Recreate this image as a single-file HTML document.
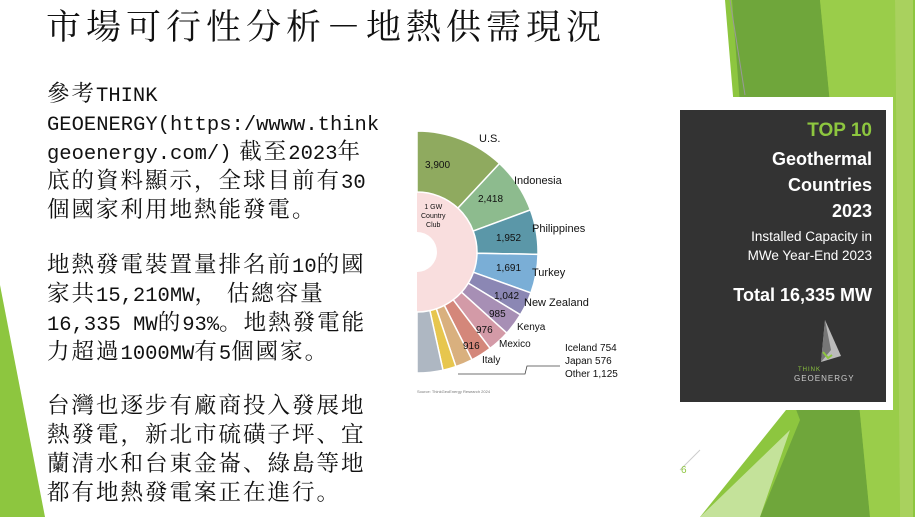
<!DOCTYPE html>
<html><head><meta charset="utf-8"><style>
body{margin:0;width:915px;height:517px;overflow:hidden;background:#fff;position:relative;font-family:"Liberation Sans",sans-serif}
.t{position:absolute;left:47px;white-space:nowrap;font-family:"Noto Serif CJK SC","Noto Serif CJK SC",serif;font-size:22.5px;letter-spacing:2px;color:#111;line-height:29px}
.t span{font-family:"Liberation Mono",monospace;font-size:20.5px;letter-spacing:0}
.ttl{position:absolute;left:46px;top:0px;font-family:"Noto Serif CJK SC",serif;font-size:35px;letter-spacing:5px;color:#111;white-space:nowrap}
.lb{position:absolute;font-size:10px;color:#111;white-space:nowrap}
.box{position:absolute;left:680px;top:110px;width:206px;height:292px;background:#333;color:#fff;text-align:right}
</style></head><body>
<svg width="915" height="517" style="position:absolute;left:0;top:0">
<polygon points="725,0 915,0 915,517 700,517 790,405 750,300" fill="#8dc63f"/>
<polygon points="732,0 820,0 870,517 760,517 800,420 755,300" fill="#6fa63b"/>
<polygon points="820,0 895,0 900,517 870,517" fill="#9acd4a"/>
<polygon points="700,517 790,430 760,517" fill="#c4e29a"/>
<polygon points="895,0 913,0 913,517 900,517" fill="#a9d15e"/>
<line x1="730" y1="0" x2="745" y2="95" stroke="#999" stroke-width="1"/>
<line x1="700" y1="450" x2="680" y2="470" stroke="#ccc" stroke-width="1"/>
<polygon points="0,285 45,517 0,517" fill="#8dc63f"/>
<rect x="403" y="110" width="277" height="292" fill="#fff"/>
<rect x="672" y="97" width="221" height="313" fill="#fff"/>
<g id="ch"></g>
</svg>
<div class="ttl">市場可行性分析－地熱供需現況</div>
<div class="t" style="top:78px">參考<span>THINK</span></div>
<div class="t" style="top:107px"><span>GEOENERGY(https:/wwww.think</span></div>
<div class="t" style="top:136px"><span>geoenergy.com/)</span> 截至<span>2023</span>年</div>
<div class="t" style="top:165px">底的資料顯示，全球目前有<span>30</span></div>
<div class="t" style="top:194px">個國家利用地熱能發電。</div>
<div class="t" style="top:249px">地熱發電裝置量排名前<span>10</span>的國</div>
<div class="t" style="top:278px">家共<span>15,210MW</span>， 估總容量</div>
<div class="t" style="top:307px"><span>16,335 MW</span>的<span>93%</span>。地熱發電能</div>
<div class="t" style="top:336px">力超過<span>1000MW</span>有<span>5</span>個國家。</div>
<div class="t" style="top:390px">台灣也逐步有廠商投入發展地</div>
<div class="t" style="top:419px">熱發電，新北市硫磺子坪、宜</div>
<div class="t" style="top:448px">蘭清水和台東金崙、綠島等地</div>
<div class="t" style="top:477px">都有地熱發電案正在進行。</div>

<div class="lb" style="left:479px;top:133px;font-size:11px">U.S.</div>
<div class="lb" style="left:425px;top:160px">3,900</div>
<div class="lb" style="left:514px;top:175px;font-size:11px">Indonesia</div>
<div class="lb" style="left:478px;top:194px">2,418</div>
<div class="lb" style="left:532px;top:223px;font-size:11px">Philippines</div>
<div class="lb" style="left:496px;top:233px">1,952</div>
<div class="lb" style="left:532px;top:267px;font-size:11px">Turkey</div>
<div class="lb" style="left:496px;top:263px">1,691</div>
<div class="lb" style="left:524px;top:297px;font-size:11px">New Zealand</div>
<div class="lb" style="left:494px;top:291px">1,042</div>
<div class="lb" style="left:517px;top:322px">Kenya</div>
<div class="lb" style="left:489px;top:309px">985</div>
<div class="lb" style="left:499px;top:339px">Mexico</div>
<div class="lb" style="left:476px;top:325px">976</div>
<div class="lb" style="left:482px;top:355px">Italy</div>
<div class="lb" style="left:463px;top:341px">916</div>
<div class="lb" style="left:565px;top:343px">Iceland 754</div>
<div class="lb" style="left:565px;top:356px">Japan 576</div>
<div class="lb" style="left:565px;top:369px">Other 1,125</div>
<div class="lb" style="left:421px;top:203px;font-size:7px;line-height:9px;text-align:center">1 GW<br>Country<br>Club</div>
<div class="lb" style="left:417px;top:389px;font-size:4px;color:#777">Source: ThinkGeoEnergy Research 2024</div>

<div class="box">
<div style="position:absolute;right:14px;top:10px;font-weight:bold;font-size:19px;color:#8dc63f">TOP 10</div>
<div style="position:absolute;right:14px;top:36px;font-weight:bold;font-size:18px;line-height:26px">Geothermal<br>Countries<br>2023</div>
<div style="position:absolute;right:14px;top:117px;font-size:13.5px;line-height:19px">Installed Capacity in<br>MWe Year-End 2023</div>
<div style="position:absolute;right:14px;top:175px;font-weight:bold;font-size:18px">Total 16,335 MW</div>
<svg style="position:absolute;left:135px;top:210px" width="30" height="45"><polygon points="10,0 26,36 6,42" fill="#bbb"/><polygon points="10,0 16,30 6,42" fill="#777"/><path d="M8 32 l5 6 l4-3" stroke="#8dc63f" stroke-width="2" fill="none"/></svg>
<div style="position:absolute;left:118px;top:257px;font-size:6px;color:#8dc63f;letter-spacing:1px;text-align:left">THINK</div>
<div style="position:absolute;left:114px;top:264px;font-size:8px;color:#ccc;letter-spacing:1px">GEOENERGY</div>
</div>
<div style="position:absolute;left:681px;top:465px;font-size:10px;color:#8dc63f">6</div>
<script>
var vals=[3900,2418,1952,1691,1042,985,976,916,754,576,1125];
var cols=["#8faa5f","#8dbb8e","#5b97a8","#7aaed6","#8b87b4","#a78fb5","#d39aa7","#d4877a","#d9b07e","#e7c64e","#aeb7c2"];
var cx=417,cy=252,R=121,r=60,tot=16335,a=-Math.PI/2,s="";
function p(rr,t){return (cx+rr*Math.cos(t)).toFixed(1)+","+(cy+rr*Math.sin(t)).toFixed(1)}
s+='<path d="M'+p(r,-Math.PI/2)+' A'+r+','+r+' 0 0 1 '+p(r,Math.PI/2)+' Z" fill="#f9dede"/>';
s+='<path d="M'+p(20,-Math.PI/2)+' A20,20 0 0 1 '+p(20,Math.PI/2)+' Z" fill="#fff"/>';
for(var i=0;i<vals.length;i++){var b=a+Math.PI*vals[i]/tot;
s+='<path d="M'+p(r,a)+' L'+p(R,a)+' A'+R+','+R+' 0 0 1 '+p(R,b)+' L'+p(r,b)+' A'+r+','+r+' 0 0 0 '+p(r,a)+' Z" fill="'+cols[i]+'" stroke="#fff" stroke-width="1.5"/>';a=b;}
s+='<polyline points="458,374 525,374 527,366 560,366" fill="none" stroke="#444" stroke-width="0.8"/>';
document.getElementById("ch").innerHTML=s;
</script>
</body></html>
